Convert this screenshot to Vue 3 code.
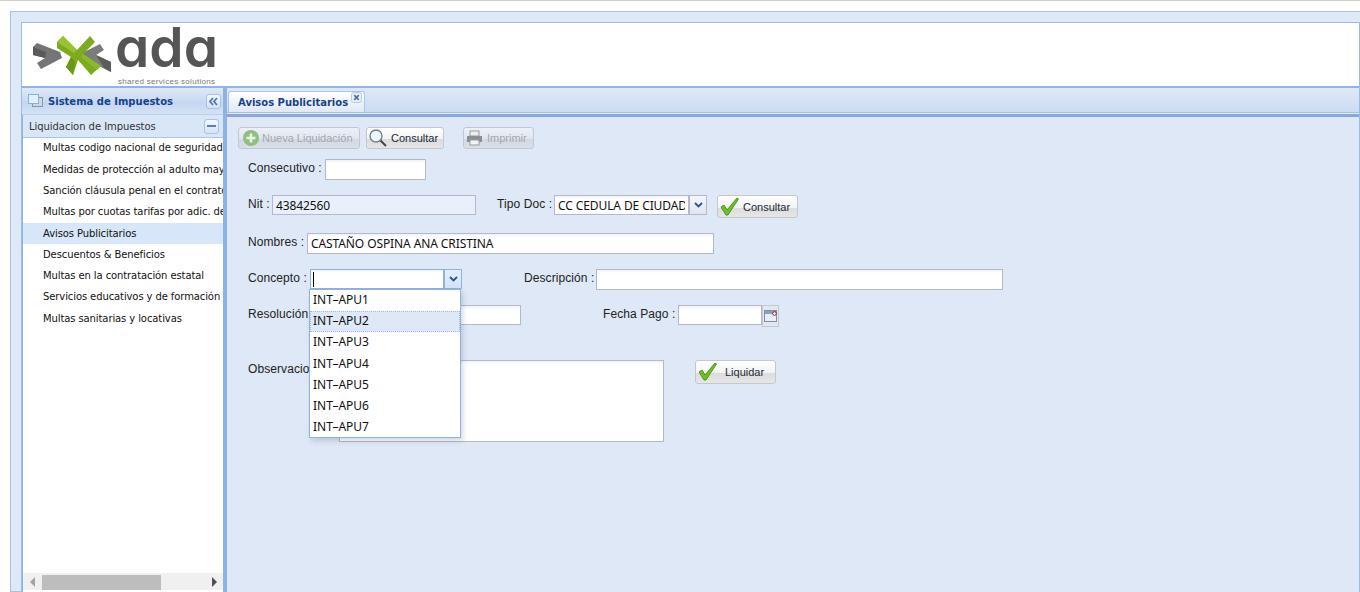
<script setup>
const menu = [
  'Multas codigo nacional de seguridad y convivencia',
  'Medidas de protección al adulto mayor',
  'Sanción cláusula penal en el contrato',
  'Multas por cuotas tarifas por adic. de servicios',
  'Avisos Publicitarios',
  'Descuentos & Beneficios',
  'Multas en la contratación estatal',
  'Servicios educativos y de formación',
  'Multas sanitarias y locativas'
]
const options = ['INT–APU1', 'INT–APU2', 'INT–APU3', 'INT–APU4', 'INT–APU5', 'INT–APU6', 'INT–APU7']
</script>

<template>
  <div class="page">
    <div class="outer">
      <div class="inner">
        <header class="brand">
          <svg class="mark" width="84" height="44" viewBox="32 34 84 44">
            <polygon points="33,47 37,43 60,52 62,58 41,69 37,63 45,58 33,55" fill="#757575"/>
            <polygon points="33,47 46,52 45,58 33,55" fill="#5a5a5a"/>
            <polygon points="82,53 100,44 104,50 96,55 111,62 111,72 82,58" fill="#7c7c7c"/>
            <polygon points="96,55 111,62 111,72 104,68" fill="#5c5c5c"/>
            <polygon points="57,42 63,36 77,50 90,36 95,42 83,54 101,66 91,75 78,60 73,75 66,67 71,57 57,48" fill="#7dab1e"/>
            <polygon points="57,42 63,36 77,50 74,53" fill="#97c431"/>
            <polygon points="83,54 101,66 97,70 81,57" fill="#8cba27"/>
            <polygon points="73,75 66,67 71,57 75,62" fill="#6b9817"/>
          </svg>
          <div class="wordmark">
            <span class="ada">ada</span>
            <span class="tag">shared services solutions</span>
          </div>
        </header>
        <div class="body">
          <aside class="west">
            <div class="west-title">
              <svg width="15" height="14" viewBox="0 0 15 14" class="win">
                <rect x="4.5" y="3.5" width="10" height="9" fill="#cfd8e6" stroke="#8b97a8"/>
                <rect x=".5" y=".5" width="10" height="9" fill="#dff0fb" stroke="#7fb3d8"/>
              </svg>
              <span>Sistema de Impuestos</span>
              <button class="tool">
                <svg width="11" height="9" viewBox="0 0 11 9"><path d="M5 1 2 4.5 5 8M9 1 6 4.5 9 8" fill="none" stroke="#4d76b5" stroke-width="1.8"/></svg>
              </button>
            </div>
            <div class="acc-head">
              <span>Liquidacion de Impuestos</span>
              <button class="tool tool-min"><i></i></button>
            </div>
            <ul class="menu">
              <li v-for="m in menu" :key="m" :class="{ on: m === 'Avisos Publicitarios' }">{{ m }}</li>
            </ul>
            <div class="hscroll">
              <i class="arrow-l"></i>
              <div class="thumb"></div>
              <i class="arrow-r"></i>
            </div>
          </aside>
          <main class="center">
            <div class="tabs">
              <div class="tab">
                <span>Avisos Publicitarios</span>
                <svg class="close" width="11" height="11" viewBox="0 0 11 11">
                  <rect x=".5" y=".5" width="10" height="10" rx="2" fill="#e6effa" stroke="#b5cbe8"/>
                  <path d="M3.2 3.2 7.8 7.8M7.8 3.2 3.2 7.8" stroke="#4f72a8" stroke-width="1.7"/>
                </svg>
              </div>
            </div>
            <div class="content">
              <div class="toolbar">
                <button class="btn off b-new">
                  <svg width="18" height="18" viewBox="0 0 18 18"><circle cx="9" cy="9" r="8" fill="#8fbe84"/><path d="M9 4.5v9M4.5 9h9" stroke="#e8f3e2" stroke-width="2.6"/></svg>
                  Nueva Liquidación
                </button>
                <button class="btn b-find">
                  <svg width="20" height="20" viewBox="0 0 20 20"><circle cx="8" cy="8" r="6" fill="#eef5fb" stroke="#6f7f8f" stroke-width="1.4"/><path d="M12.5 12.5 18 18" stroke="#444" stroke-width="2"/></svg>
                  Consultar
                </button>
                <button class="btn off b-print">
                  <svg width="17" height="16" viewBox="0 0 17 16"><rect x="4" y="1" width="9" height="5" fill="#eee" stroke="#999"/><rect x="1" y="6" width="15" height="6" fill="#8a8f96"/><rect x="4" y="10" width="9" height="5" fill="#f4f4f4" stroke="#999"/></svg>
                  Imprimir
                </button>
              </div>

              <div class="row r-cons">
                <label>Consecutivo :</label>
                <input class="field f-cons" />
              </div>
              <div class="row r-nit">
                <label>Nit :</label>
                <input class="field f-nit" value="43842560" readonly />
                <label class="l-tipo">Tipo Doc :</label>
                <input class="field f-tipo" value="CC CEDULA DE CIUDADANIA" readonly />
                <span class="trigger">
                  <svg width="9" height="6" viewBox="0 0 9 6"><path d="M1 1 4.5 4.5 8 1" fill="none" stroke="#2f5288" stroke-width="1.8"/></svg>
                </span>
                <button class="btn b-ok b-ok-1">
                  <svg class="check" width="20" height="19" viewBox="0 0 20 19"><path d="M1 10 4 8l3 5L17 1l1.5 1L8 18H6z" fill="#6fc21e" stroke="#3f7d18" stroke-width=".8"/></svg>
                  Consultar
                </button>
              </div>
              <div class="row r-nom">
                <label>Nombres :</label>
                <input class="field f-nom" value="CASTAÑO OSPINA ANA CRISTINA" readonly />
              </div>
              <div class="row r-con">
                <label>Concepto :</label>
                <div class="combo-wrap">
                  <div class="field f-con"><i class="caret"></i></div>
                  <span class="trigger active">
                    <svg width="9" height="6" viewBox="0 0 9 6"><path d="M1 1 4.5 4.5 8 1" fill="none" stroke="#2f5288" stroke-width="1.8"/></svg>
                  </span>
                  <ul class="drop">
                    <li v-for="o in options" :key="o" :class="{ hover: o === 'INT–APU2' }">{{ o }}</li>
                  </ul>
                </div>
                <label class="l-desc">Descripción :</label>
                <input class="field f-desc" />
              </div>
              <div class="row r-res">
                <label>Resolución :</label>
                <input class="field f-res" />
                <label class="l-fecha">Fecha Pago :</label>
                <input class="field f-fecha" />
                <span class="cal">
                  <svg width="14" height="14" viewBox="0 0 14 14"><rect x=".5" y="1.5" width="12" height="11" fill="#e8eef6" stroke="#7f8fa6"/><rect x="1" y="2" width="11" height="3" fill="#8aa0c0"/><circle cx="10.5" cy="4.5" r="1.8" fill="#fff" stroke="#8b1c1c"/></svg>
                </span>
              </div>
              <div class="row r-obs">
                <label>Observacion :</label>
                <textarea class="field f-obs"></textarea>
                <button class="btn b-ok b-ok-2">
                  <svg class="check" width="20" height="19" viewBox="0 0 20 19"><path d="M1 10 4 8l3 5L17 1l1.5 1L8 18H6z" fill="#6fc21e" stroke="#3f7d18" stroke-width=".8"/></svg>
                  Liquidar
                </button>
              </div>
            </div>
          </main>
        </div>
      </div>
    </div>
  </div>
</template>

<style>
html, body { margin: 0; background: #fff; overflow: hidden; }
</style>

<style scoped>
.page { width: 1360px; height: 592px; overflow: hidden; background: #fff; border-top: 1px solid #cfcfcf; box-sizing: border-box; padding: 10px 0 0 10px; font-family: "Liberation Sans", Arial, sans-serif; font-size: 12px; color: #222; }
.outer { height: 581px; border: 1px solid #a4c1ec; border-right: 0; background: #dfe8f6; padding: 10px 0 0 10px; box-sizing: border-box; }
.inner { height: 570px; border: 1px solid #99bbe8; border-bottom: 0; box-sizing: border-box; display: flex; flex-direction: column; }
.brand { height: 63px; background: #fff; border-bottom: 2px solid #8fb4e6; display: flex; flex: none; align-items: flex-start; padding: 0 0 0 10px; overflow: hidden; }
.mark { margin: 11px 0 0 0; flex: none; }
.wordmark { display: flex; flex-direction: column; width: 110px; }
.ada { font-family: Inter, "Open Sans", sans-serif; font-feature-settings: "cv11" 1; font-size: 55px; line-height: 48px; height: 48px; font-weight: 600; color: #555; letter-spacing: 0; margin-left: -1px; }
.tag { font-size: 8px; color: #777; letter-spacing: .3px; line-height: 10px; margin: 6px 0 0 2px; white-space: nowrap; }
.body { flex: 1; display: flex; min-height: 0; }
.west { width: 200px; flex: none; background: #fff; display: flex; flex-direction: column; border-right: 4px solid #8db2e3; box-sizing: content-box; border-left: 1px solid #8fb4e6; }
.west-title { height: 26px; flex: none; margin-left: -1px; background: linear-gradient(#dfe8f6, #c5d7f0 60%, #d4e2f5); border-bottom: 1px solid #b9cfee; display: flex; align-items: center; padding-left: 6px; font-family: "DejaVu Sans", sans-serif; font-weight: 700; font-size: 10px; color: #15428b; }
.win { margin-right: 5px; }
.tool { margin: 0 2px 0 auto; width: 15px; height: 15px; padding: 0; border: 1px solid #a7c2e6; border-radius: 3px; background: linear-gradient(#f2f7fd, #d4e3f6); display: flex; align-items: center; justify-content: center; }
.acc-head { height: 22px; flex: none; background: #d9e6f8; border-bottom: 1px solid #a9c5ec; display: flex; align-items: center; padding-left: 6px; font-family: "DejaVu Sans", sans-serif; font-size: 10px; letter-spacing: -.05px; color: #333; }
.tool-min { margin-right: 4px; }
.tool-min i { width: 9px; height: 2px; background: #5a80b8; display: block; }
.menu { list-style: none; margin: -.7px 0 0; padding: 0; flex: 1; overflow: hidden; font-family: "DejaVu Sans", sans-serif; font-size: 10px; letter-spacing: -.1px; }
.menu li { height: 21.3px; line-height: 21.3px; padding-left: 20px; white-space: nowrap; overflow: hidden; color: #111; }
.menu li.on { background: #d8e6f9; }
.hscroll { height: 17px; flex: none; background: #f0f0f0; display: flex; align-items: center; margin-bottom: 2px; padding: 0 6px 0 7px; }
.arrow-l { width: 0; height: 0; border: 5px solid transparent; border-left: 0; border-right: 5px solid #a3a3a3; }
.thumb { width: 119px; height: 15px; margin: 2px 0 0 7px; background: #bdbdbd; }
.arrow-r { width: 0; height: 0; margin-left: auto; border: 5px solid transparent; border-right: 0; border-left: 5px solid #505050; }
.center { flex: 1; display: flex; flex-direction: column; min-width: 0; }
.tabs { flex: none; background: linear-gradient(#dfe8f6, #cbdcf2); border-bottom: 1px solid #aebfd8; padding: 3px 0 0 1px; height: 21px; }
.tab { width: 137px; height: 21px; box-sizing: border-box; margin-bottom: -1px; background: linear-gradient(#fff, #dfe8f6); border: 1px solid #a9c5ec; border-bottom: 0; border-radius: 3px 3px 0 0; display: flex; align-items: center; padding-left: 9px; position: relative; font-family: "DejaVu Sans", sans-serif; font-weight: 700; font-size: 10px; color: #15428b; white-space: nowrap; }
.close { position: absolute; right: 2px; top: 0; }
.content { flex: 1; background: #dfe8f6; border-top: 3px solid #85a9db; margin-top: 1px; }
.toolbar { display: flex; padding: 10px 0 0 11px; height: 22px; }
.btn { height: 22px; padding: 0; border: 1px solid #c4c8ce; border-radius: 3px; background: linear-gradient(#fff 0, #f3f3f3 55%, #dcdcdc 56%, #e6e6e6); display: flex; align-items: center; font-family: "Liberation Sans", Arial, sans-serif; font-size: 11px; color: #1a2a3a; white-space: nowrap; box-sizing: border-box; }
.btn svg { flex: none; }
.btn.off { color: #a4a8ad; background: linear-gradient(#ecf1f8, #dfe6ef 55%, #d2d9e2 56%, #d9dfe8); }
.b-new { width: 122px; padding-left: 3px; gap: 2px; }
.b-find { width: 78px; margin-left: 6px; padding-left: 1px; gap: 3px; }
.b-print { width: 71px; margin-left: 19px; padding-left: 2px; gap: 4px; }
.row { display: flex; align-items: flex-start; padding-left: 21px; }
.row label { white-space: nowrap; line-height: 16px; color: #222; letter-spacing: .08px; }
.field { box-sizing: border-box; border: 1px solid #b5b8c8; background: linear-gradient(#f1f1f1, #fff 3px); height: 21px; padding: 0 3px; margin: 0; font-family: "Noto Sans", sans-serif; font-size: 12px; letter-spacing: -.1px; color: #111; outline: 0; border-radius: 0; display: block; }
.r-cons { margin-top: 10px; }
.r-cons label { width: 77px; margin-top: 1px; }
.f-cons { width: 101px; }
.r-nit { margin-top: 15px; height: 23px; }
.r-nit label { width: 24px; margin-top: 1px; }
.f-nit { width: 204px; height: 20px; background: #e9f0fb; }
.r-nit .l-tipo { width: 57px; margin-left: 21px; margin-top: 1px; }
.f-tipo { width: 135px; height: 20px; }
.trigger { width: 18px; height: 20px; box-sizing: border-box; border: 1px solid #b5b8c8; background: linear-gradient(#f3f6fb, #dfe6f1); display: flex; align-items: center; justify-content: center; }
.b-ok { width: 81px; height: 23px; position: relative; padding-left: 25px; }
.check { position: absolute; left: 2px; top: 1px; }
.b-ok-1 { margin-left: 10px; }
.r-nom { margin-top: 15px; }
.r-nom label { width: 59px; margin-top: 1px; }
.f-nom { width: 407px; }
.r-con { margin-top: 15px; }
.r-con label { width: 62px; margin-top: 1px; }
.combo-wrap { display: flex; position: relative; }
.f-con { width: 134px; height: 20px; border-color: #8db2e3; position: relative; padding: 0; }
.caret { position: absolute; left: 2px; top: 2px; width: 1px; height: 15px; background: #000; }
.trigger.active { background: linear-gradient(#e4eefb, #d2e3f8); border-color: #8db2e3; width: 18px; }
.drop { position: absolute; left: -1px; top: 20px; width: 152px; height: 149px; box-sizing: border-box; margin: 0; padding: 0; list-style: none; background: #fff; border: 1px solid #8db2e3; box-shadow: 2px 3px 5px rgba(60, 80, 120, .22); z-index: 5; font-family: "Noto Sans", sans-serif; }
.drop li { height: 21.2px; line-height: 18px; padding-left: 2px; box-sizing: border-box; border: 1px dotted transparent; color: #111; }
.drop li.hover { background: #dfe8f6; border-color: #9dbbe8; }
.r-con .l-desc { width: 72px; margin-left: 62px; }
.f-desc { width: 407px; }
.r-res { margin-top: 15px; }
.r-res label { width: 78px; margin-top: 1px; }
.f-res { width: 195px; height: 20px; }
.r-res .l-fecha { width: 75px; margin-left: 82px; }
.f-fecha { width: 84px; height: 20px; }
.cal { width: 17px; height: 22px; box-sizing: border-box; border: 1px solid #c2c8d2; background: #e4e8ee; display: flex; align-items: center; justify-content: center; }
.r-obs { margin-top: 33px; }
.r-obs label { width: 91px; margin-top: 1px; }
.f-obs { width: 325px; height: 82px; resize: none; }
.b-ok-2 { margin-left: 31px; height: 24px; padding-left: 29px; }
</style>
